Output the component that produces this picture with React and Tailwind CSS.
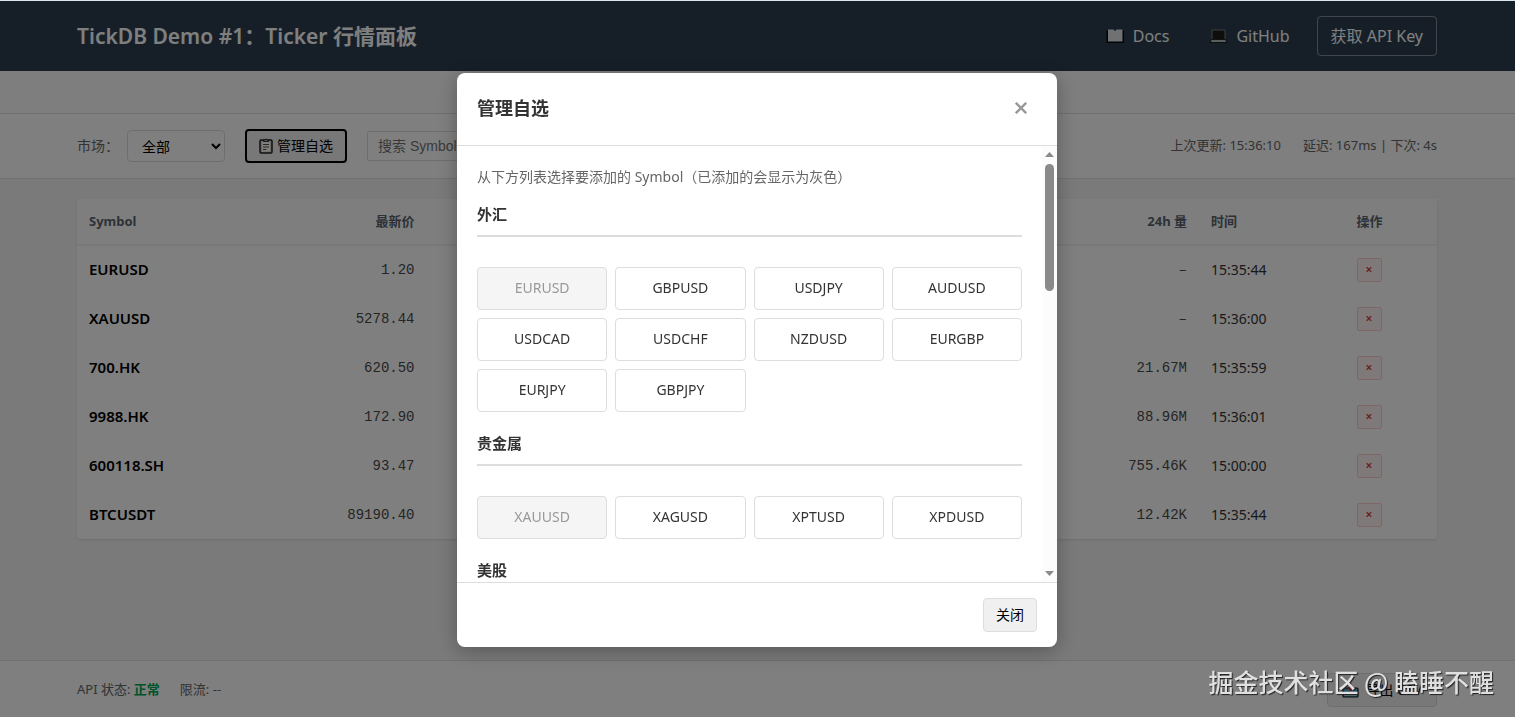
import React from 'react'

const rows = [
  { symbol: 'EURUSD', price: '1.20', volume: '–', time: '15:35:44' },
  { symbol: 'XAUUSD', price: '5278.44', volume: '–', time: '15:36:00' },
  { symbol: '700.HK', price: '620.50', volume: '21.67M', time: '15:35:59' },
  { symbol: '9988.HK', price: '172.90', volume: '88.96M', time: '15:36:01' },
  { symbol: '600118.SH', price: '93.47', volume: '755.46K', time: '15:00:00' },
  { symbol: 'BTCUSDT', price: '89190.40', volume: '12.42K', time: '15:35:44' },
]

const groups = [
  {
    name: '外汇',
    symbols: ['EURUSD', 'GBPUSD', 'USDJPY', 'AUDUSD', 'USDCAD', 'USDCHF', 'NZDUSD', 'EURGBP', 'EURJPY', 'GBPJPY'],
  },
  { name: '贵金属', symbols: ['XAUUSD', 'XAGUSD', 'XPTUSD', 'XPDUSD'] },
  { name: '美股', symbols: [] },
]

const added = rows.map((row) => row.symbol)

function BookIcon() {
  return (
    <svg className="w-5 h-4" viewBox="0 0 20 16" aria-hidden="true">
      <path d="M1.500 2.500h17.500v12.500h-17.500z" fill="#050709" />
      <path d="M3 1.500h5.500L10 3l1.500-1.500H17.500v12h-14.500z" fill="#dfe3e6" />
    </svg>
  )
}

function LaptopIcon() {
  return (
    <svg className="w-5 h-4" viewBox="0 0 20 16" aria-hidden="true">
      <path d="M4 2h13v9.500H4z" fill="#1c1c18" stroke="#7a8086" strokeWidth="1" />
      <path d="M3.500 11.500h14l1.500 3H2z" fill="#b7bdc2" stroke="#050709" strokeWidth="0.8" />
    </svg>
  )
}

function ClipboardIcon() {
  return (
    <svg className="w-[14px] h-[16px]" viewBox="0 0 14 16" fill="none" stroke="#222" aria-hidden="true">
      <rect x="1" y="2" width="12" height="13" rx="1" strokeWidth="1.500" fill="#d8cfc4" />
      <path d="M3 3.500h8v10H3z" fill="#fff" stroke="none" />
      <path d="M4.500 3.500v-1.500h1.500L7 0.800l1 1.200h1.500v1.500z" fill="#aaa" strokeWidth="0.9" />
      <path d="M4 6.500h6M4 9h6M4 11.500h3.500" strokeWidth="0.8" />
    </svg>
  )
}

function InboxIcon() {
  return (
    <svg className="w-[17px] h-[16px]" viewBox="0 0 17 16" aria-hidden="true">
      <rect x="1" y="6" width="15" height="9" rx="1" fill="#4aa3c4" stroke="#1a1a1a" strokeWidth="1.200" />
      <path d="M2 10.500h4l1 1.500h3l1-1.500h4V14H2z" fill="#b9dbe8" />
      <path d="M8.500 1v6M6 5.500l2.500 3 2.500-3" stroke="#c0392b" strokeWidth="1.500" fill="none" />
    </svg>
  )
}

function Header() {
  return (
    <header className="bg-[#2c3e50] text-white">
      <div className="max-w-[1400px] mx-auto px-5 py-[15px] flex items-center justify-between">
        <h1 className="text-[21px] leading-8 font-semibold">TickDB Demo #1：Ticker 行情面板</h1>
        <nav className="flex items-center gap-[15px] text-base">
          <a href="#docs" className="flex items-center gap-2 px-3">
            <BookIcon />
            Docs
          </a>
          <a href="#github" className="flex items-center gap-2 px-3">
            <LaptopIcon />
            GitHub
          </a>
          <a href="#key" className="h-10 px-[13px] flex items-center border border-white/40 rounded">
            获取 API Key
          </a>
        </nav>
      </div>
    </header>
  )
}

function Toolbar() {
  return (
    <div className="bg-white border-y border-[#e0e0e0]">
      <div className="max-w-[1400px] mx-auto px-5 py-[15px] flex items-center justify-between">
        <div className="flex items-center gap-5 text-sm">
          <div className="flex items-center gap-2">
            <label htmlFor="market" className="text-[#666]">市场：</label>
            <select
              id="market"
              className="w-[98px] h-8 px-2.5 bg-white text-black border border-[#ddd] rounded"
            >
              <option>全部</option>
            </select>
          </div>
          <button className="h-[34px] px-3 flex items-center gap-1 bg-[#f0f0f0] text-black border-2 border-black rounded">
            <ClipboardIcon />
            管理自选
          </button>
          <input
            type="text"
            aria-label="搜索"
            placeholder="搜索 Symbol"
            className="w-[150px] h-[30px] px-2.5 font-['Liberation_Sans','Noto_Sans_CJK_SC',sans-serif] border border-[#ddd] rounded-xs placeholder:text-[#757575]"
          />
        </div>
        <div className="flex items-center gap-[22px] text-[13px] text-[#666]">
          <span>上次更新: 15:36:10</span>
          <span>延迟: 167ms | 下次: 4s</span>
        </div>
      </div>
    </div>
  )
}

function TickerTable() {
  return (
    <table className="w-full table-fixed bg-white rounded shadow-[0_1px_3px_rgba(0,0,0,0.1)] text-sm">
      <colgroup>
        <col className="w-[12%]" />
        <col className="w-[13.7%]" />
        <col />
        <col className="w-[11%]" />
        <col className="w-[10.7%]" />
        <col className="w-[6.8%]" />
      </colgroup>
      <thead>
        <tr className="h-[46px] bg-[#fcfdfd] border-b-2 border-[#eff1f3] text-[13px] text-[#5a6570]">
          <th className="px-3 text-left font-bold">Symbol</th>
          <th className="px-3 text-right font-bold">最新价</th>
          <td />
          <th className="px-3 text-right font-bold">24h 量</th>
          <th className="px-3 text-left font-bold">时间</th>
          <th className="px-3 text-left font-bold">操作</th>
        </tr>
      </thead>
      <tbody className="text-[#333]">
        {rows.map((row) => (
          <tr key={row.symbol} className="h-[49px]">
            <td className="px-3 text-[15px] font-semibold text-black">{row.symbol}</td>
            <td className="px-3 text-right font-['Liberation_Mono',monospace] text-[#4a4a4a]">{row.price}</td>
            <td />
            <td className="px-3 text-right font-['Liberation_Mono',monospace] text-[#4a4a4a]">{row.volume}</td>
            <td className="px-3">{row.time}</td>
            <td className="px-3">
              <button
                aria-label={`删除 ${row.symbol}`}
                className="w-[25px] h-6 flex items-center justify-center text-xs font-semibold text-[#cc3333] bg-[#fff2f2] border border-[#ffcccc] rounded-xs"
              >
                ×
              </button>
            </td>
          </tr>
        ))}
      </tbody>
    </table>
  )
}

function Footer() {
  return (
    <footer className="bg-white border-t border-[#e0e0e0]">
      <div className="max-w-[1400px] mx-auto px-5 pt-3 pb-2.5 flex items-center justify-between">
        <div className="flex gap-5 text-[13px] text-[#666]">
          <span>
            API 状态: <strong className="font-semibold text-[#00a650]">正常</strong>
          </span>
          <span>限流: --</span>
        </div>
        <button className="h-[34px] px-3.5 flex items-center gap-1.5 text-sm text-black bg-[#f0f0f0] border border-[#ddd] rounded">
          <InboxIcon />
          导出 CSV
        </button>
      </div>
    </footer>
  )
}

function Scrollbar() {
  return (
    <div className="w-[15px] py-1.5 flex flex-col items-center gap-[7px] bg-[#fcfcfc]" aria-hidden="true">
      <svg className="w-[9px] h-[5px]" viewBox="0 0 9 5">
        <path d="M4.500 0L9 5H0z" fill="#8a8a8a" />
      </svg>
      <div className="w-[9px] h-[127px] rounded-full bg-[#8a8a8a]" />
      <svg className="w-[9px] h-[5px] mt-auto" viewBox="0 0 9 5">
        <path d="M0 0h9L4.500 5z" fill="#8a8a8a" />
      </svg>
    </div>
  )
}

function WatchlistModal() {
  return (
    <div className="fixed inset-x-0 top-px bottom-0 pt-0.5 pr-px flex items-center justify-center bg-black/50">
      <div
        role="dialog"
        aria-labelledby="modal-title"
        className="w-[600px] max-w-[90%] max-h-[80vh] flex flex-col bg-white rounded-lg overflow-hidden text-[#333] shadow-[0_4px_20px_rgba(0,0,0,0.3)]"
      >
        <div className="px-5 pt-[19px] pb-[21px] flex items-center justify-between border-b border-[#ddd]">
          <h3 id="modal-title" className="text-lg leading-8 font-bold">管理自选</h3>
          <button aria-label="关闭窗口" className="w-8 h-8 flex items-center justify-center text-[#999]">
            <svg className="w-[12px] h-[12px]" viewBox="0 0 12 12" fill="none" stroke="currentColor" strokeWidth="2.400">
              <path d="M0.800 0.800l10.400 10.400M11.200 0.800L0.800 11.200" />
            </svg>
          </button>
        </div>

        <div className="flex-1 min-h-0 flex">
          <div className="flex-1 overflow-y-auto [scrollbar-width:none] p-5">
            <p className="mb-[15px] text-sm leading-[22px] text-[#666]">
              从下方列表选择要添加的 Symbol（已添加的会显示为灰色）
            </p>
            {groups.map((group) => (
              <section key={group.name} className="mb-5">
                <h4 className="mb-[30px] pb-2.5 text-[15px] leading-[22px] font-semibold border-b-2 border-[#ddd]">
                  {group.name}
                </h4>
                <div className="grid grid-cols-4 gap-2">
                  {group.symbols.map((symbol) => (
                    <button
                      key={symbol}
                      disabled={added.includes(symbol)}
                      className="h-[43px] pb-0.5 text-sm bg-white border border-[#ddd] rounded disabled:bg-[#f5f5f5] disabled:text-[#999]"
                    >
                      {symbol}
                    </button>
                  ))}
                </div>
              </section>
            ))}
          </div>
          <Scrollbar />
        </div>

        <div className="px-5 py-[15px] flex justify-end border-t border-[#ddd]">
          <button className="h-[34px] px-3 text-sm text-black bg-[#f0f0f0] border border-[#ddd] rounded">关闭</button>
        </div>
      </div>
    </div>
  )
}

function App() {
  return (
    <div className="min-h-screen flex flex-col bg-[#f5f5f5] border-t border-[#d8e6ec] font-['Noto_Sans','Noto_Sans_CJK_SC',sans-serif] *:pr-px">
      <Header />
      <div className="h-[42px] bg-[#fdfdfd]" />
      <Toolbar />
      <main className="flex-1">
        <div className="max-w-[1400px] mx-auto p-5">
          <TickerTable />
        </div>
      </main>
      <Footer />
      <WatchlistModal />
      <p className="fixed right-5 bottom-[18px] text-[25px] leading-9 font-medium text-[#e0e0e0] font-['Noto_Sans_CJK_SC',sans-serif] [text-shadow:1px_1px_1px_#222]">
        掘金技术社区 @ 瞌睡不醒
      </p>
    </div>
  )
}

export default App
